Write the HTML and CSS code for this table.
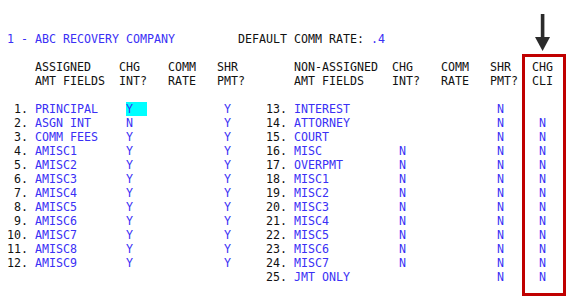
FILE: index.html
```html
<!DOCTYPE html>
<html>
<head>
<meta charset="utf-8">
<link rel="stylesheet" href="styles.css">
</head>
<body>
<div class="screen">
<div class="line"><span class="b">1 - ABC RECOVERY COMPANY</span>         DEFAULT COMM RATE: <span class="b">.4</span></div>
<div class="line"> </div>
<div class="line">    ASSIGNED    CHG    COMM   SHR        NON-ASSIGNED  CHG    COMM   SHR   CHG</div>
<div class="line">    AMT FIELDS  INT?   RATE   PMT?       AMT FIELDS    INT?   RATE   PMT?  CLI</div>
<div class="line"> </div>
<div class="line"> 1. <span class="b">PRINCIPAL    <span class="cur">Y  </span>           Y</span>     13. <span class="b">INTEREST                     N</span></div>
<div class="line"> 2. <span class="b">ASGN INT     N             Y</span>     14. <span class="b">ATTORNEY                     N     N</span></div>
<div class="line"> 3. <span class="b">COMM FEES    Y             Y</span>     15. <span class="b">COURT                        N     N</span></div>
<div class="line"> 4. <span class="b">AMISC1       Y             Y</span>     16. <span class="b">MISC           N             N     N</span></div>
<div class="line"> 5. <span class="b">AMISC2       Y             Y</span>     17. <span class="b">OVERPMT        N             N     N</span></div>
<div class="line"> 6. <span class="b">AMISC3       Y             Y</span>     18. <span class="b">MISC1          N             N     N</span></div>
<div class="line"> 7. <span class="b">AMISC4       Y             Y</span>     19. <span class="b">MISC2          N             N     N</span></div>
<div class="line"> 8. <span class="b">AMISC5       Y             Y</span>     20. <span class="b">MISC3          N             N     N</span></div>
<div class="line"> 9. <span class="b">AMISC6       Y             Y</span>     21. <span class="b">MISC4          N             N     N</span></div>
<div class="line">10. <span class="b">AMISC7       Y             Y</span>     22. <span class="b">MISC5          N             N     N</span></div>
<div class="line">11. <span class="b">AMISC8       Y             Y</span>     23. <span class="b">MISC6          N             N     N</span></div>
<div class="line">12. <span class="b">AMISC9       Y             Y</span>     24. <span class="b">MISC7          N             N     N</span></div>
<div class="line">                                     25. <span class="b">JMT ONLY                     N     N</span></div>
<div class="callout"></div>
<svg class="arrow" width="15" height="37" viewBox="0 0 15 37">
<rect x="5.8" y="0" width="3.6" height="24" fill="#2b2b2b"/>
<polygon points="0,23 15,23 7.6,37" fill="#2b2b2b"/>
</svg>
</div>
</body>
</html>
```
FILE: styles.css
```css
html, body {
  margin: 0;
  padding: 0;
  background: #ffffff;
}

.screen {
  position: relative;
  width: 587px;
  height: 301px;
  padding: 32px 0 0 7px;
  box-sizing: border-box;
  font-family: "DejaVu Sans Mono", "Liberation Mono", monospace;
  font-size: 11.63px;
  color: #111111;
}

.line {
  white-space: pre;
  height: 14px;
  line-height: 14px;
}

.b {
  color: #3a30f5;
}

.cur {
  background: #00ffff;
}

.callout {
  position: absolute;
  left: 522px;
  top: 54px;
  width: 44px;
  height: 242px;
  box-sizing: border-box;
  border: 3px solid #c00000;
}

.arrow {
  position: absolute;
  left: 535px;
  top: 14px;
}
```
